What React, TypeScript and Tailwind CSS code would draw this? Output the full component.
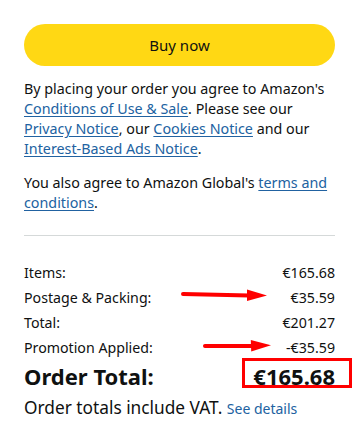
import React from "react";

const Arrow = ({ w }: { w: number }) => (
  <svg width={w} height="14" viewBox={`0 0 ${w} 14`} className="block">
    <line x1="2" y1="6" x2={w - 18} y2="7.5" stroke="#ff0000" strokeWidth="4" strokeLinecap="round" />
    <polygon points={`${w - 20},1.5 ${w},7.5 ${w - 20},13`} fill="#ff0000" />
  </svg>
);

export default function App() {
  const link = "text-[#2162a1] underline underline-offset-2";
  return (
    <div className="w-[359px] h-[429px] bg-white px-6 pt-6 text-[#0f1111] overflow-hidden" style={{ fontFamily: '"Noto Sans", "Open Sans", sans-serif' }}>
      <button className="w-full h-[42px] rounded-full bg-[#ffd814] text-[15px] text-[#0f1111]">Buy now</button>
      <p className="mt-[13px] text-[14.3px] leading-[20px]">
        By placing your order you agree to Amazon's <span className={link}>Conditions of Use &amp; Sale</span>. Please see our <span className={link}>Privacy Notice</span>, our <span className={link}>Cookies Notice</span> and our <span className={link}>Interest-Based Ads Notice</span>.
      </p>
      <p className="mt-[14px] text-[14.3px] leading-[20px]">
        You also agree to Amazon Global's <span className={link}>terms and conditions</span>.
      </p>
      <div className="mt-[22px] h-px bg-[#d5d9d9]" />
      <div className="mt-[24px] flex flex-col text-[14.2px]">
        <div className="flex justify-between h-[25px] items-center"><span>Items:</span><span>€165.68</span></div>
        <div className="flex justify-between h-[25px] items-center relative"><span>Postage &amp; Packing:</span><span>€35.59</span>
          <div className="absolute left-[157px] top-[3px]"><Arrow w={86} /></div>
        </div>
        <div className="flex justify-between h-[25px] items-center"><span>Total:</span><span>€201.27</span></div>
        <div className="flex justify-between h-[25px] items-center relative"><span>Promotion Applied:</span><span>-€35.59</span>
          <div className="absolute left-[179px] top-[4px] -rotate-2"><Arrow w={68} /></div>
        </div>
        <div className="flex justify-between items-center relative">
          <span className="text-[22px] font-bold">Order Total:</span>
          <span className="text-[22px] font-bold">€165.68</span>
          <div className="absolute right-[-17px] top-[-2px] w-[110px] h-[30px] border-[3px] border-[#ff0000]" />
        </div>
        <div className="mt-[3px] text-[17.3px] leading-[24px]">Order totals include VAT. <span className="text-[14px] text-[#2162a1]">See details</span></div>
      </div>
    </div>
  );
}
